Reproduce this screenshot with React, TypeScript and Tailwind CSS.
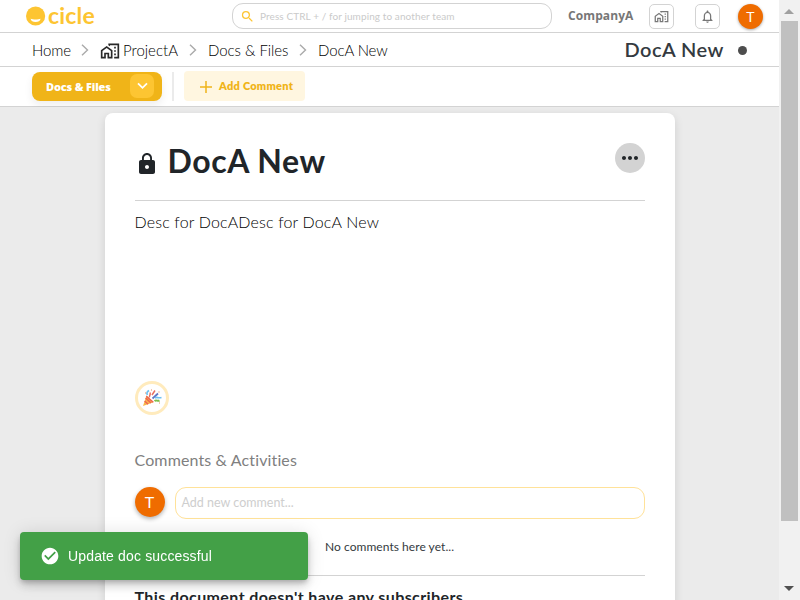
import type { ReactNode } from "react";
import {
  MdCheckCircle,
  MdLock,
  MdMoreHoriz,
  MdNotificationsNone,
  MdOutlineHomeWork,
  MdSearch,
} from "react-icons/md";

function Logo() {
  return (
    <div className="flex h-8 items-center">
      <svg width="20" height="20" viewBox="0 0 20 20" className="shrink-0">
        <circle cx="9.600" cy="10" r="9.600" fill="#fdc532" />
        <path d="M4.600 12.800c2.500 1 7.500 1 10 0-.4 2.200-2.300 3.200-5 3.200s-4.600-1-5-3.200z" fill="#fff" />
      </svg>
      <span className="-mt-[2px] ml-[2px] text-[23px] leading-8 font-bold tracking-[0.2px] text-[#fdc532]">cicle</span>
    </div>
  );
}

function Chevron() {
  return (
    <svg width="8" height="12" viewBox="0 0 8 12" fill="none" stroke="#aaa" strokeWidth="1.4" className="mt-px shrink-0">
      <path d="M1 .7 6.500 6 1 11.300" />
    </svg>
  );
}

function IconButton({ children }: { children: ReactNode }) {
  return (
    <button className="flex size-[25px] shrink-0 items-center justify-center rounded-[5px] border border-[#d3d3d3] text-[#777]">
      {children}
    </button>
  );
}

function Header() {
  return (
    <header className="flex h-[33px] items-start border-b border-[#d3d3d3] pl-[26px]">
      <div className="w-[206px]">
        <Logo />
      </div>
      <div className="mt-[3px] flex h-[26px] w-[320px] items-center rounded-[11px] border border-[#d3d3d3] pl-[7px]">
        <MdSearch className="size-[15px] text-[#fdc532]" />
        <span className="ml-[5px] text-[10px] tracking-[0.1px] text-[#cacaca]">
          Press CTRL + / for jumping to another team
        </span>
      </div>
      <div className="ml-[16px] flex h-8 w-[81px] items-center font-['Open_Sans',sans-serif] text-[12px] font-bold tracking-[0.1px] text-[#777]">
        CompanyA
      </div>
      <div className="mt-1 flex">
        <div className="w-[46px]">
          <IconButton>
            <MdOutlineHomeWork className="size-[15px]" />
          </IconButton>
        </div>
        <div className="w-[43px]">
          <IconButton>
            <MdNotificationsNone className="size-[15px]" />
          </IconButton>
        </div>
        <div className="flex size-[25px] items-center justify-center rounded-full bg-[#ef6c00] text-[14px] text-white shadow-[0_1px_3px_rgba(0,0,0,0.35)]">
          T
        </div>
      </div>
    </header>
  );
}

function Breadcrumb() {
  return (
    <nav className="flex h-[34px] items-center border-b border-[#d3d3d3] pl-8 text-[15px] font-light text-black">
      <span className="mt-[2px] w-[49px] tracking-[-0.1px]">Home</span>
      <Chevron />
      <MdOutlineHomeWork className="mt-[2px] ml-[11px] size-[20px] shrink-0 text-[#292929]" />
      <span className="mt-[2px] ml-[3px] w-[66px]">ProjectA</span>
      <Chevron />
      <span className="mt-[2px] ml-[11px] w-[91px] tracking-[-0.05px]">Docs &amp; Files</span>
      <Chevron />
      <span className="mt-[2px] ml-[11px] tracking-[-0.1px]">DocA New</span>
      <span className="-mt-px ml-auto text-[20px] font-semibold tracking-[0.5px] text-[#343a40]">DocA New</span>
      <span className="mt-[2px] mr-8 ml-[14px] size-[9px] rounded-full bg-[#4d4d4d]" />
    </nav>
  );
}

function Toolbar() {
  return (
    <div className="flex h-10 items-start border-b border-[#d3d3d3] bg-white pl-8">
      <button className="mt-[5px] flex h-[29px] w-[130px] items-center rounded-[8px] bg-[#f0b418] pl-[14px] text-white shadow-[0_4px_8px_rgba(0,0,0,0.07)]">
        <span className="mt-px w-[84px] text-left font-['Open_Sans',sans-serif] text-[11px] font-extrabold tracking-[-0.17px]">
          Docs &amp; Files
        </span>
        <span className="-mt-px flex size-6 items-center justify-center rounded-[7px] bg-[#fdc532]">
          <svg width="11" height="8" viewBox="0 0 11 8" fill="none" stroke="#fff" strokeWidth="1.800">
            <path d="M1 1.300 5.500 5.800 10 1.300" />
          </svg>
        </span>
      </button>
      <span className="mt-[5px] ml-[10px] h-[29px] w-[2px] bg-[#ebebeb]" />
      <button className="mt-1 ml-[10px] flex h-[30px] w-[121px] items-center rounded-[4px] bg-[#fff6e0] pl-4 text-[#f0b418]">
        <svg width="12" height="12" viewBox="0 0 12 12" stroke="currentColor" strokeWidth="1.500" className="mt-px">
          <path d="M6 0v12M0 6h12" />
        </svg>
        <span className="ml-[7px] text-[11px] font-extrabold tracking-[0.25px]">Add Comment</span>
      </button>
    </div>
  );
}

function PartyPopper() {
  return (
    <svg width="20" height="18" viewBox="0 0 20 18" fill="none">
      <path d="M4.500 6.500 1 17l10.500-3.800z" fill="#f9b64b" />
      <path d="m3.600 9 5.400 5M2.600 12l3.500 3.200M4.300 7.200l7 6" stroke="#ee6352" strokeWidth="1.500" />
      <path d="M7.500 8.500C7 6 9 6 8 3.500M10 6l3-4.500" stroke="#e8705f" strokeWidth="1.500" />
      <path d="m10.500 9.500 5.500-5" stroke="#5f74c4" strokeWidth="1.700" />
      <path d="M12.500 12c2-1.500 3 .500 5-.500" stroke="#7ebd4a" strokeWidth="2" />
      <path d="M13 9c2-1.500 3 .500 6.500-.500M5.500 6C4 4 5.500 2.500 7 1.500" stroke="#6fc0f0" strokeWidth="1.700" />
      <path d="M17 14h1M3 4h1M17 2.500v1M9 1h1" stroke="#ec8c62" strokeWidth="1.200" />
    </svg>
  );
}

function DocumentCard() {
  return (
    <article className="h-[580px] w-[570px] rounded-[8px] bg-white px-[30px] shadow-[0_3px_10px_rgba(0,0,0,0.12)]">
      <div className="flex h-[88px] items-start border-b border-[#d3d3d3]">
        <MdLock className="mt-[39px] size-6 shrink-0 text-[#212529]" />
        <h1 className="mt-[28px] ml-[9px] text-[32px] leading-10 font-bold tracking-[0.6px] text-[#212529]">DocA New</h1>
        <button className="mt-[30px] ml-auto flex size-[30px] items-center justify-center rounded-full bg-[#d3d3d3] text-[#212529]">
          <MdMoreHoriz className="size-6" />
        </button>
      </div>
      <p className="mt-[9px] h-[171px] text-[16px] leading-6 font-light tracking-[0.16px] text-black">
        Desc for DocADesc for DocA New
      </p>
      <button className="flex size-[34px] items-center justify-center rounded-full border-[3px] border-[#ffebbd]">
        <PartyPopper />
      </button>
      <h2 className="mt-[33px] text-[16px] leading-6 tracking-[0.13px] text-[#808080]">Comments &amp; Activities</h2>
      <div className="mt-[15px] flex">
        <div className="flex size-[30px] items-center justify-center rounded-full bg-[#ef6c00] text-[16px] text-white shadow-[0_2px_4px_rgba(0,0,0,0.3)]">
          T
        </div>
        <div className="ml-[10px] flex h-8 flex-1 items-center rounded-[11px] border border-[#ffe299] pl-[6px] text-[12.5px] text-[#cecece]">
          Add new comment...
        </div>
      </div>
      <p className="mt-[18px] text-center text-[12px] leading-5 tracking-[0.05px] text-[#343a40]">
        No comments here yet...
      </p>
      <hr className="mt-[18px] border-[#d3d3d3]" />
      <h3 className="mt-[9px] text-[16px] leading-6 font-bold tracking-[0.4px] text-[#212529]">
        This document doesn't have any subscribers
      </h3>
    </article>
  );
}

function Scrollbar() {
  return (
    <div className="flex h-full w-[21px] flex-col items-center bg-[#f1f1f1]">
      <svg width="21" height="21" viewBox="0 0 21 21">
        <path d="M5 14h10l-5-5z" fill="#a0a0a0" />
      </svg>
      <div className="mr-px h-[500px] w-[17px] bg-[#c0c0c0]" />
      <svg width="21" height="20" viewBox="0 0 21 20" className="mt-[57px]">
        <path d="M5 8h10l-5 5z" fill="#505050" />
      </svg>
    </div>
  );
}

function Toast() {
  return (
    <div
      role="alert"
      className="fixed bottom-5 left-5 flex h-12 w-[288px] items-center rounded-[4px] bg-[#43a047] pl-5 font-['Liberation_Sans',Arial,sans-serif] text-[14px] text-white shadow-[0_3px_5px_-1px_rgba(0,0,0,0.2),0_6px_10px_rgba(0,0,0,0.14),0_1px_18px_rgba(0,0,0,0.12)]"
    >
      <MdCheckCircle className="size-5" />
      <span className="ml-2 tracking-[0.15px]">Update doc successful</span>
    </div>
  );
}

export default function App() {
  return (
    <div className="flex h-[600px] w-[800px] overflow-hidden bg-white font-[Lato,sans-serif]">
      <div className="flex w-[779px] flex-col overflow-hidden">
        <Header />
        <Breadcrumb />
        <Toolbar />
        <main className="flex h-[493px] justify-center overflow-hidden bg-[#ebebeb] pt-[6px]">
          <DocumentCard />
        </main>
      </div>
      <Scrollbar />
      <Toast />
    </div>
  );
}
